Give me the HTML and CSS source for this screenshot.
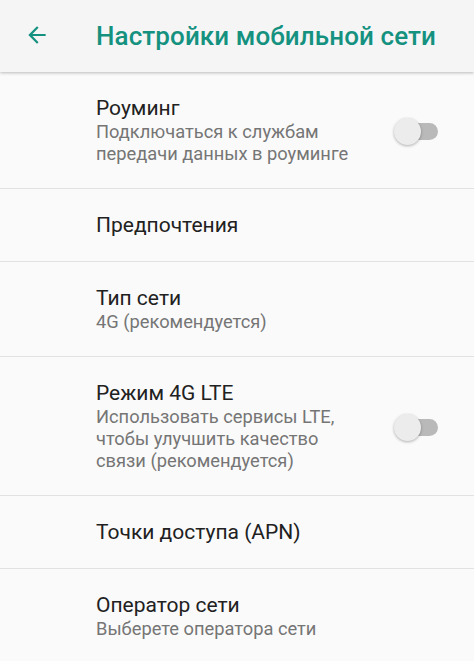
FILE: index.html
```html
<!DOCTYPE html>
<html lang="ru">
<head>
  <meta charset="UTF-8">
  <meta name="viewport" content="width=device-width, initial-scale=1.0">
  <title>Настройки мобильной сети</title>
  <link rel="stylesheet" href="styles.css">
</head>
<body>
  <!-- Toolbar -->
  <header class="toolbar">
    <button class="back-btn" aria-label="Назад">
      <svg viewBox="0 0 24 24" width="26" height="26">
        <path d="M20 11H7.83l5.59-5.59L12 4l-8 8 8 8 1.41-1.41L7.83 13H20v-2z" fill="currentColor"/>
      </svg>
    </button>
    <h1 class="toolbar-title">Настройки мобильной сети</h1>
  </header>

  <!-- Settings list -->
  <ul class="settings">
    <li class="item item-roaming">
      <div class="item-text">
        <p class="item-title">Роуминг</p>
        <p class="item-summary">Подключаться к службам<br>передачи данных в роуминге</p>
      </div>
      <span class="switch"><span class="switch-thumb"></span></span>
    </li>
    <li class="item">
      <div class="item-text">
        <p class="item-title">Предпочтения</p>
      </div>
    </li>
    <li class="item">
      <div class="item-text">
        <p class="item-title">Тип сети</p>
        <p class="item-summary">4G (рекомендуется)</p>
      </div>
    </li>
    <li class="item item-lte">
      <div class="item-text">
        <p class="item-title">Режим 4G LTE</p>
        <p class="item-summary">Использовать сервисы LTE,<br>чтобы улучшить качество<br>связи (рекомендуется)</p>
      </div>
      <span class="switch"><span class="switch-thumb"></span></span>
    </li>
    <li class="item">
      <div class="item-text">
        <p class="item-title">Точки доступа (APN)</p>
      </div>
    </li>
    <li class="item">
      <div class="item-text">
        <p class="item-title">Оператор сети</p>
        <p class="item-summary">Выберете оператора сети</p>
      </div>
    </li>
  </ul>
</body>
</html>
```

FILE: styles.css
```css
/* General Reset */
* {
  margin: 0;
  padding: 0;
  box-sizing: border-box;
}

body {
  font-family: Roboto, "Noto Sans", sans-serif;
  background: #fafafa;
  color: #212121;
  overflow: hidden;
}

/* Toolbar */
.toolbar {
  height: 72px;
  display: flex;
  align-items: center;
  background: #f5f5f5;
  box-shadow: 0 1px 3px rgba(0, 0, 0, 0.25);
  position: relative;
  z-index: 1;
}

.back-btn {
  width: 96px;
  height: 72px;
  display: flex;
  align-items: center;
  padding-left: 24px;
  padding-bottom: 2px;
  background: none;
  border: none;
  color: #14917f;
}

.toolbar-title {
  font-size: 26px;
  font-weight: 500;
  color: #14917f;
  letter-spacing: 0.1px;
}

/* Settings list */
.settings {
  list-style: none;
}

.item {
  display: flex;
  align-items: center;
  padding: 23px 36px 23px 96px;
  border-bottom: 1px solid #e2e2e2;
}

.item-text {
  flex: 1;
}

.item-title {
  font-size: 21px;
  line-height: 26px;
  color: #212121;
}

.item-summary {
  font-size: 18.3px;
  line-height: 22px;
  color: #757575;
}

/* Switch (off) */
.switch {
  position: relative;
  width: 36px;
  height: 17px;
  border-radius: 9px;
  background: #b9b9b9;
  margin-top: 2px;
}

.switch-thumb {
  position: absolute;
  left: -8px;
  top: -5px;
  width: 27px;
  height: 27px;
  border-radius: 50%;
  background: #ececec;
  box-shadow: 0 1px 3px rgba(0, 0, 0, 0.3);
}
```
